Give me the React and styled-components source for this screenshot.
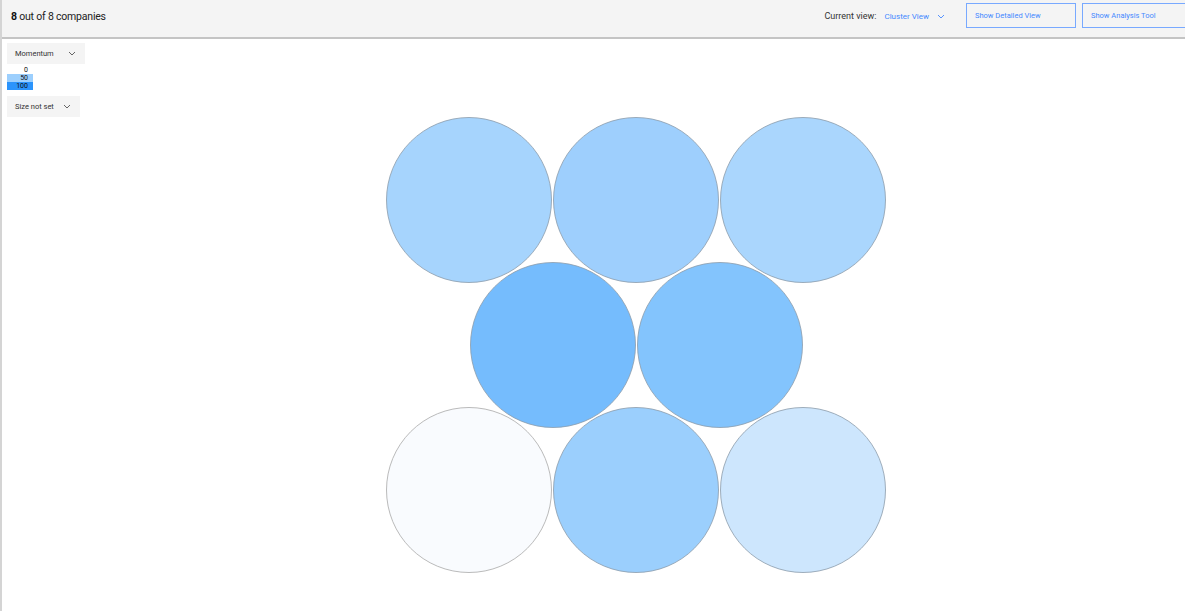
import React from "react";
import styled, { createGlobalStyle } from "styled-components";

const GlobalStyle = createGlobalStyle`
  html, body {
    margin: 0;
    padding: 0;
    background: #ffffff;
    font-family: Roboto, "Noto Sans", sans-serif;
    overflow: hidden;
  }
`;

// 거품 차트 데이터 (페이지 좌표)
const bubbles = [
  { cx: 469, cy: 200, fill: "#a6d4fd" },
  { cx: 636, cy: 200, fill: "#9ecffd" },
  { cx: 803, cy: 200, fill: "#aad6fd" },
  { cx: 553, cy: 345, fill: "#75bcfd" },
  { cx: 720, cy: 345, fill: "#83c4fd" },
  { cx: 469, cy: 490, fill: "#f9fbfe" },
  { cx: 636, cy: 490, fill: "#9bcffd" },
  { cx: 803, cy: 490, fill: "#cde6fd" },
];

const Chevron = ({ color = "#555" }) => (
  <svg width="8" height="5" viewBox="0 0 8 5" fill="none">
    <path d="M1 1l3 3 3-3" stroke={color} strokeWidth="0.9" />
  </svg>
);

const App = () => {
  return (
    <>
      <GlobalStyle />
      <Page>
        <Header>
          <Count>
            <b>8</b> out of 8 companies
          </Count>
          <ViewPicker>
            <span className="label">Current view:</span>
            <span className="value">Cluster View</span>
            <Chevron color="#4589ff" />
          </ViewPicker>
          <OutlineButton>Show Detailed View</OutlineButton>
          <OutlineButton $last>Show Analysis Tool</OutlineButton>
        </Header>
        <Body>
          <Sidebar>
            <Select $width={78}>
              Momentum
              <Chevron />
            </Select>
            <Legend>
              <LegendRow>0</LegendRow>
              <LegendRow $bg="#9ccffd">50</LegendRow>
              <LegendRow $bg="#2b94fc">100</LegendRow>
            </Legend>
            <Select $width={73}>
              Size not set
              <Chevron />
            </Select>
          </Sidebar>
          <Chart width="1098" height="572" viewBox="0 0 1098 572">
            {bubbles.map((b, i) => (
              <circle
                key={i}
                cx={b.cx - 87}
                cy={b.cy - 39}
                r="82.5"
                fill={b.fill}
                stroke={i === 5 ? "#a8a8a8" : "#8a9aaa"}
                strokeWidth="0.8"
              />
            ))}
          </Chart>
        </Body>
      </Page>
    </>
  );
};

const Page = styled.div`
  width: 1185px;
  height: 611px;
  box-sizing: border-box;
  border-left: 2px solid #d4d4d4;
  display: flex;
  flex-direction: column;
`;

const Header = styled.div`
  height: 37px;
  flex: none;
  background: #f4f4f4;
  border-bottom: 2px solid #c4c4c4;
  display: flex;
  align-items: center;
  padding-left: 9px;
  gap: 6px;
  white-space: nowrap;
  overflow: hidden;
`;

const Count = styled.div`
  font-size: 10.5px;
  letter-spacing: -0.2px;
  color: #222;
  flex: 1;
  padding-bottom: 5px;
  b {
    font-weight: 700;
    color: #111;
  }
`;

const ViewPicker = styled.div`
  display: flex;
  align-items: center;
  margin-right: 15px;
  padding-bottom: 5px;
  font-size: 9px;
  .label {
    color: #333;
    margin-right: 8px;
  }
  .value {
    color: #4589ff;
    font-size: 8px;
    margin-right: 8px;
  }
`;

const OutlineButton = styled.div`
  flex: none;
  width: 110px;
  height: 25px;
  box-sizing: border-box;
  border: 1px solid #78a9ff;
  color: #4589ff;
  font-size: 7.5px;
  display: flex;
  align-items: center;
  padding-left: 8px;
  margin-bottom: 6px;
  margin-right: ${(p) => (p.$last ? "-7px" : "0")};
`;

const Body = styled.div`
  flex: 1;
  display: flex;
  min-height: 0;
`;

const Sidebar = styled.div`
  width: 85px;
  flex: none;
  box-sizing: border-box;
  padding: 4px 0 0 5px;
  display: flex;
  flex-direction: column;
  align-items: flex-start;
`;

const Select = styled.div`
  width: ${(p) => p.$width}px;
  height: 21px;
  box-sizing: border-box;
  background: #f4f4f4;
  color: #333;
  font-size: 7.5px;
  display: flex;
  align-items: center;
  justify-content: space-between;
  padding: 0 9px 0 8px;
`;

const Legend = styled.div`
  width: 26px;
  margin: 2px 0 6px;
  display: flex;
  flex-direction: column;
`;

const LegendRow = styled.div`
  height: 8px;
  line-height: 8px;
  font-size: 7px;
  text-align: right;
  padding-right: 5px;
  color: #111;
  background: ${(p) => p.$bg || "transparent"};
`;

const Chart = styled.svg`
  flex: none;
  display: block;
`;

export default App;
